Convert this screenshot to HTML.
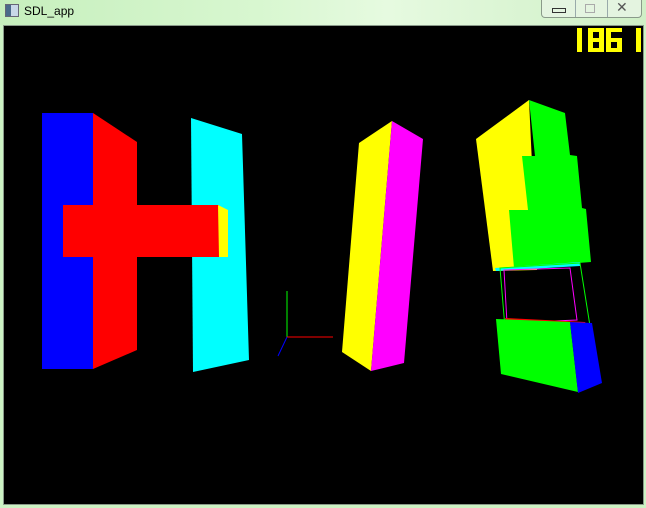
<!DOCTYPE html>
<html><head><style>
html,body{margin:0;padding:0;width:646px;height:508px;overflow:hidden;background:#cdf3c4;font-family:"Liberation Sans",sans-serif;}
.title{position:absolute;left:0;top:0;width:646px;height:25px;background:linear-gradient(90deg,#c6efbd 0%,#d8f7d0 40%,#e6fae0 60%,#cfefc6 100%);}
.t{position:absolute;left:24px;top:4px;font-size:12px;color:#000;}
.ico{position:absolute;left:5px;top:4px;width:12px;height:11px;background:linear-gradient(90deg,#4a6a8a 40%,#c8d8e8 40%);border:1px solid #667;}
.btns{position:absolute;left:541px;top:0;width:99px;height:17px;border:1px solid #8a9a8a;border-top:none;border-radius:0 0 4px 4px;background:#e4f4e0;}
.client{position:absolute;left:3px;top:25px;width:641px;height:480px;background:#000;border:1px solid #8a9a8a;box-sizing:border-box;}
svg{position:absolute;left:0;top:0;}
</style></head><body>
<div class="title"><div class="ico"></div><div class="t">SDL_app</div>
<div class="btns"><div style="position:absolute;left:33px;top:0;width:1px;height:17px;background:#9aa"></div><div style="position:absolute;left:65px;top:0;width:1px;height:17px;background:#9aa"></div>
<div style="position:absolute;left:10px;top:8px;width:12px;height:3px;border:1px solid #333;"></div>
<div style="position:absolute;left:43px;top:4px;width:8px;height:7px;border:1px solid #aaa;"></div>
<div style="position:absolute;left:74px;top:-1px;font-size:14px;color:#555;">✕</div></div></div>
<div class="client"></div>
<svg width="646" height="508" xmlns="http://www.w3.org/2000/svg">
<rect x="42" y="113" width="51" height="256" fill="#00f"/>
<polygon points="93,113 137,142 137,350 93,369" fill="#f00"/>
<polygon points="191,118 242,134 249,360 193,372" fill="#0ff"/>
<rect x="63" y="205" width="156" height="52" fill="#f00"/>
<polygon points="218,205 228,210 228,257 219,257" fill="#ff0"/>
<polygon points="392,121 359,143 342,352 371,371" fill="#ff0"/>
<polygon points="392,121 423,139 404,363 371,371" fill="#f0f"/>
<line x1="287" y1="337" x2="287" y2="291" stroke="#0f0"/>
<line x1="287" y1="337" x2="333" y2="337" stroke="#f00"/>
<line x1="287" y1="337" x2="278" y2="356" stroke="#00f"/>
<polygon points="476,139 529,100 537,270 493,271" fill="#ff0"/>
<polygon points="529,100 565,113 570,155 577,156 582,208 586,209 591,262 514,268 509,210 528,210 522,156 535,156" fill="#0f0"/>
<polygon points="495,268 580,262 580,266 496,271" fill="#0ff"/>
<polygon points="500,268 580,263 590,326 505,328" fill="none" stroke="#0f0"/>
<polygon points="504,270 570,268 577,320 507,323" fill="none" stroke="#f0f"/>
<polygon points="505,318 585,322 588,326 506,322" fill="#f00"/>
<polygon points="496,319 570,322 578,392 501,374" fill="#0f0"/>
<polygon points="570,322 592,323 602,383 578,393" fill="#00f"/>
<g fill="#ff0">
<rect x="577" y="28" width="5" height="24"/>
<rect x="588" y="28" width="5" height="24"/><rect x="599" y="28" width="5" height="24"/>
<rect x="588" y="28" width="16" height="4"/><rect x="588" y="38" width="16" height="4"/><rect x="588" y="48" width="16" height="4"/>
<rect x="606" y="28" width="5" height="24"/><rect x="617" y="38" width="5" height="14"/>
<rect x="606" y="28" width="16" height="4"/><rect x="606" y="38" width="16" height="4"/><rect x="606" y="48" width="16" height="4"/>
<rect x="636" y="28" width="5" height="24"/>
</g>
</svg>
</body></html>
